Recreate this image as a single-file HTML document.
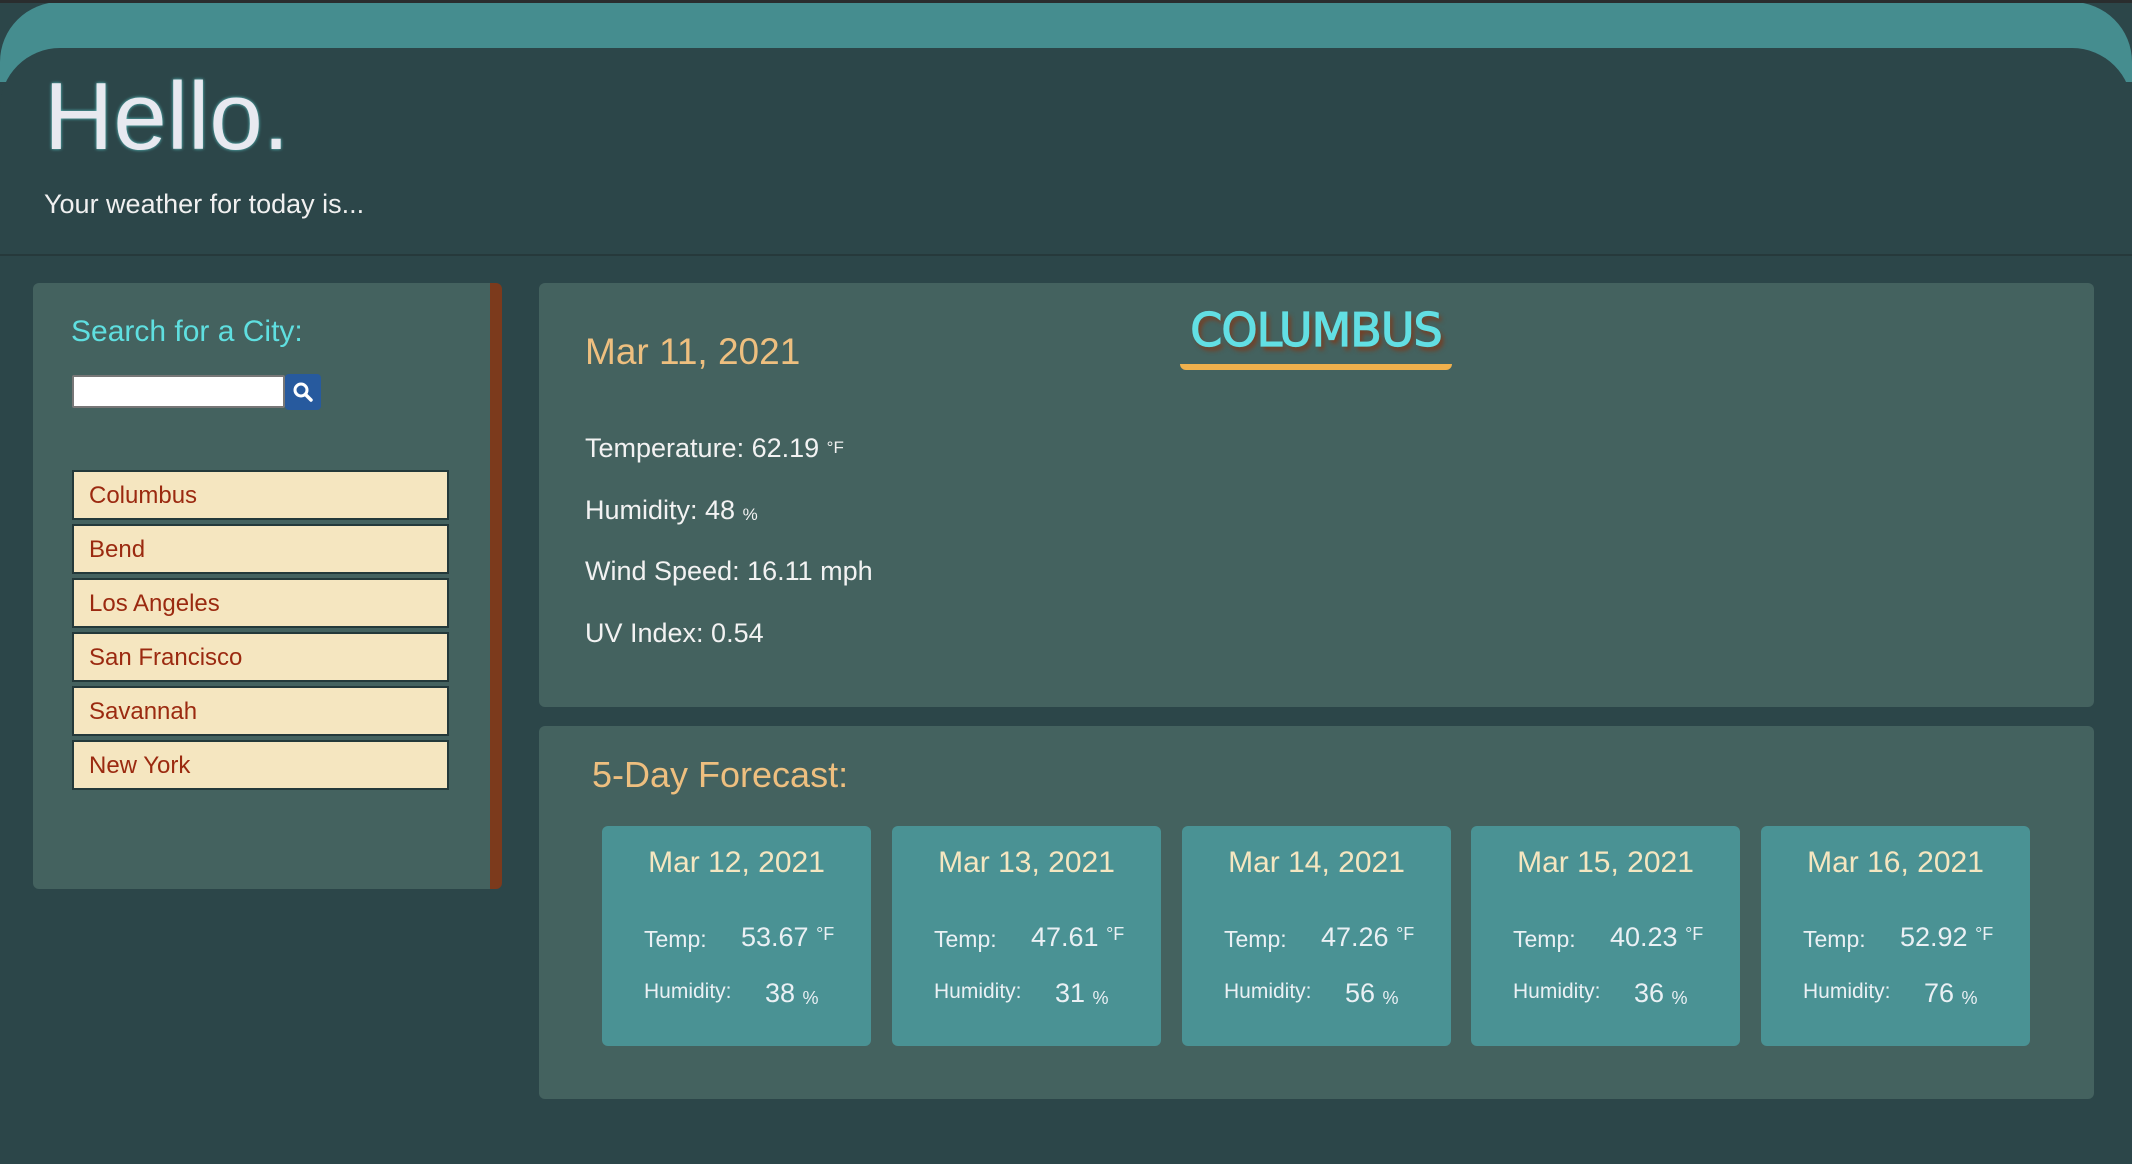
<!DOCTYPE html>
<html><head><meta charset="utf-8"><style>
*{margin:0;padding:0;box-sizing:border-box}
body{width:2132px;height:1164px;background:#2c4649;font-family:"Liberation Sans",sans-serif;position:relative;overflow:hidden}
.topbar{position:absolute;left:0;top:0;width:2132px;height:3px;background:#2a2d2e}
.band{position:absolute;left:0;top:2px;width:2132px;height:80px;background:#458d8f;border-radius:60px 60px 0 0}
.head{position:absolute;left:0;top:48px;width:2132px;height:208px;background:#2c4649;border-radius:60px 60px 0 0;border-bottom:2px solid #26393b}
.hello{position:absolute;left:44px;top:62px;font-size:96px;color:#e8e9f0;text-shadow:0 0 3px #5fd0d0}
.sub{position:absolute;left:44px;top:189px;font-size:27px;color:#f0f0f0}
.panel{position:absolute;background:#44625f;border-radius:6px}
.left{left:33px;top:283px;width:469px;height:606px;border-right:12px solid #7c3a1c}
.st{position:absolute;left:38px;top:32px;font-size:30px;color:#5fdfe0}
.inp{position:absolute;left:39px;top:92px;width:213px;height:33px;background:#fff;border:2px solid #777;border-radius:2px}
.btn{position:absolute;left:252px;top:91px;width:36px;height:36px;background:#275a9e;border-radius:4px}
.list{position:absolute;left:39px;top:187px;width:377px}
.item{height:50px;margin-bottom:4px;background:#f5e6c0;border:2px solid #23393a;color:#9b2a10;font-size:24px;padding-left:15px;line-height:48px}
.main{left:539px;top:283px;width:1555px;height:424px}
.date{position:absolute;left:46px;top:48px;font-size:37px;color:#eebf7f}
.city{position:absolute;left:641px;top:20px;width:272px;text-align:center;font-family:"DejaVu Sans",sans-serif;font-size:46px;color:#62dfe3;-webkit-text-stroke:1.2px #62dfe3;text-shadow:3px 4px 5px #7c3a1c;letter-spacing:-1px}
.ul{position:absolute;left:641px;top:81px;width:272px;height:6px;background:#f0b04c;border-radius:0 0 6px 6px}
.ln{position:absolute;left:46px;font-size:27px;color:#f2f2f2}
.ln small{font-size:17px;vertical-align:4px}
.fc{left:539px;top:726px;width:1555px;height:373px}
.fct{position:absolute;left:53px;top:28px;font-size:36px;color:#eebf7f}
.card{position:absolute;top:100px;width:269px;height:220px;background:#4a9294;border-radius:6px;color:#eaf0f4}
.cd{position:absolute;top:20px;width:100%;text-align:center;font-size:30px;color:#f5e6c0}
.cl{position:absolute;left:42px;font-size:23px}
.cv{position:absolute;font-size:27px}
.cv small{font-size:18px;vertical-align:6px}
.cv small.p{vertical-align:-2px}
</style></head><body>
<div class="band"></div><div class="topbar"></div>
<div class="head"></div>
<div class="hello">Hello.</div>
<div class="sub">Your weather for today is...</div>

<div class="panel left">
<div class="st">Search for a City:</div>
<div class="inp"></div>
<div class="btn"><svg width="36" height="36" viewBox="0 0 36 36"><circle cx="16" cy="16" r="6" fill="none" stroke="#fff" stroke-width="3"/><line x1="20.5" y1="20.5" x2="26" y2="26" stroke="#fff" stroke-width="3.5" stroke-linecap="round"/></svg></div>
<div class="list">
<div class="item">Columbus</div><div class="item">Bend</div><div class="item">Los Angeles</div><div class="item">San Francisco</div><div class="item">Savannah</div><div class="item">New York</div>
</div>
</div>

<div class="panel main">
<div class="date">Mar 11, 2021</div>
<div class="city">COLUMBUS</div>
<div class="ul"></div>
<div class="ln" style="top:150px">Temperature: 62.19 <small>°F</small></div>
<div class="ln" style="top:212px">Humidity: 48 <small style="vertical-align:-1px">%</small></div>
<div class="ln" style="top:273px">Wind Speed: 16.11 mph</div>
<div class="ln" style="top:335px">UV Index: 0.54</div>
</div>

<div class="panel fc">
<div class="fct">5-Day Forecast:</div>
<div class="card" style="left:63px"><div class="cd">Mar 12, 2021</div><div class="cl" style="top:100px">Temp:</div><div class="cv" style="left:139px;top:96px">53.67 <small>°F</small></div><div class="cl" style="top:154px;font-size:21px">Humidity:</div><div class="cv" style="left:163px;top:152px">38 <small class="p">%</small></div></div>
<div class="card" style="left:353px"><div class="cd">Mar 13, 2021</div><div class="cl" style="top:100px">Temp:</div><div class="cv" style="left:139px;top:96px">47.61 <small>°F</small></div><div class="cl" style="top:154px;font-size:21px">Humidity:</div><div class="cv" style="left:163px;top:152px">31 <small class="p">%</small></div></div>
<div class="card" style="left:643px"><div class="cd">Mar 14, 2021</div><div class="cl" style="top:100px">Temp:</div><div class="cv" style="left:139px;top:96px">47.26 <small>°F</small></div><div class="cl" style="top:154px;font-size:21px">Humidity:</div><div class="cv" style="left:163px;top:152px">56 <small class="p">%</small></div></div>
<div class="card" style="left:932px"><div class="cd">Mar 15, 2021</div><div class="cl" style="top:100px">Temp:</div><div class="cv" style="left:139px;top:96px">40.23 <small>°F</small></div><div class="cl" style="top:154px;font-size:21px">Humidity:</div><div class="cv" style="left:163px;top:152px">36 <small class="p">%</small></div></div>
<div class="card" style="left:1222px"><div class="cd">Mar 16, 2021</div><div class="cl" style="top:100px">Temp:</div><div class="cv" style="left:139px;top:96px">52.92 <small>°F</small></div><div class="cl" style="top:154px;font-size:21px">Humidity:</div><div class="cv" style="left:163px;top:152px">76 <small class="p">%</small></div></div>
</div>
</body></html>
